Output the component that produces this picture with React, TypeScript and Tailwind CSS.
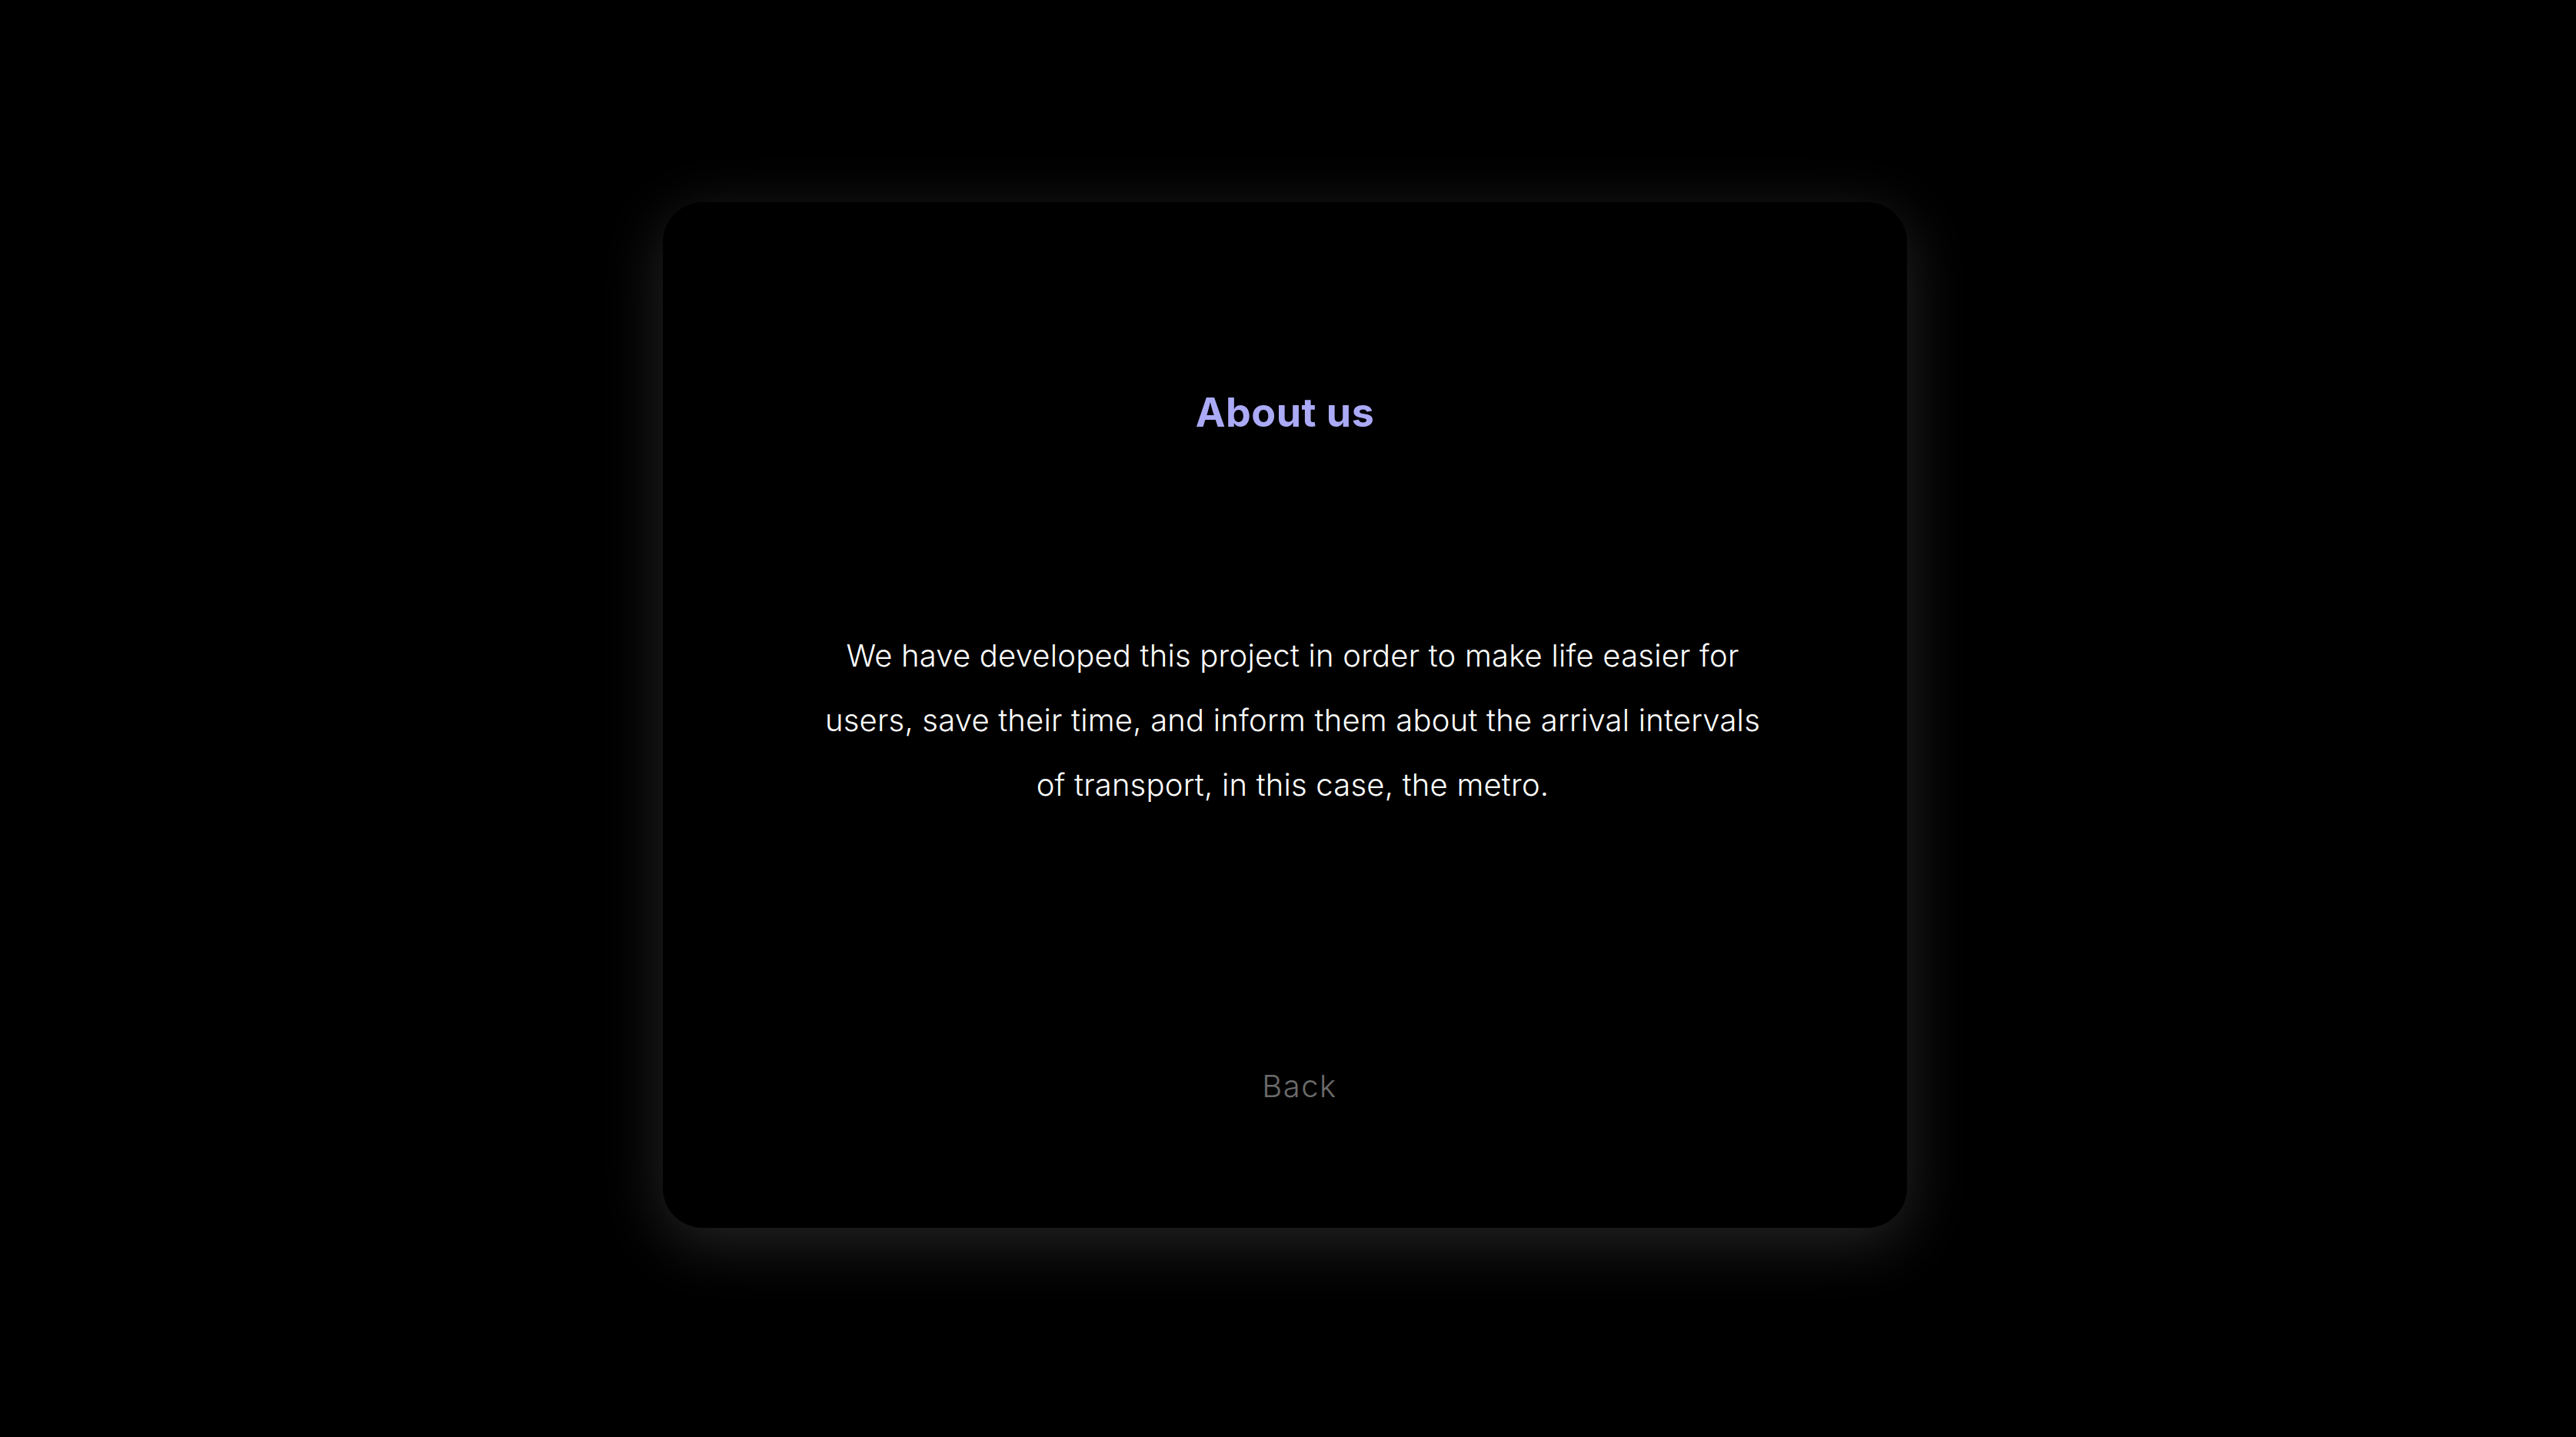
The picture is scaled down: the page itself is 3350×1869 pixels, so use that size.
import React from "react";

export default function App() {
  return (
    <div className="flex h-[1869px] w-full items-center justify-center bg-black pr-[8px] pb-[10px]" style={{ fontFamily: "Inter, 'Noto Sans', sans-serif" }}>
      <div className="flex h-[1334px] w-[1618px] flex-col items-center rounded-[52px] bg-black shadow-[0_18px_80px_rgba(255,255,255,0.15)]">
        <h1 className="mt-[242px] text-[52px] font-bold leading-[64px] tracking-[0.5px] text-[#abaaf6]">About us</h1>
        <p className="mt-[242px] ml-[20px] text-center text-[40px] font-light leading-[84px] tracking-[0.2px] text-white">
          We have developed this project in order to make life easier for
          <br />
          users, save their time, and inform them about the arrival intervals
          <br />
          of transport, in this case, the metro.
        </p>
        <button className="mt-[326px] ml-[38px] text-[40px] font-light leading-[48px] tracking-[1.5px] text-[#6b6b6b]">Back</button>
      </div>
    </div>
  );
}
